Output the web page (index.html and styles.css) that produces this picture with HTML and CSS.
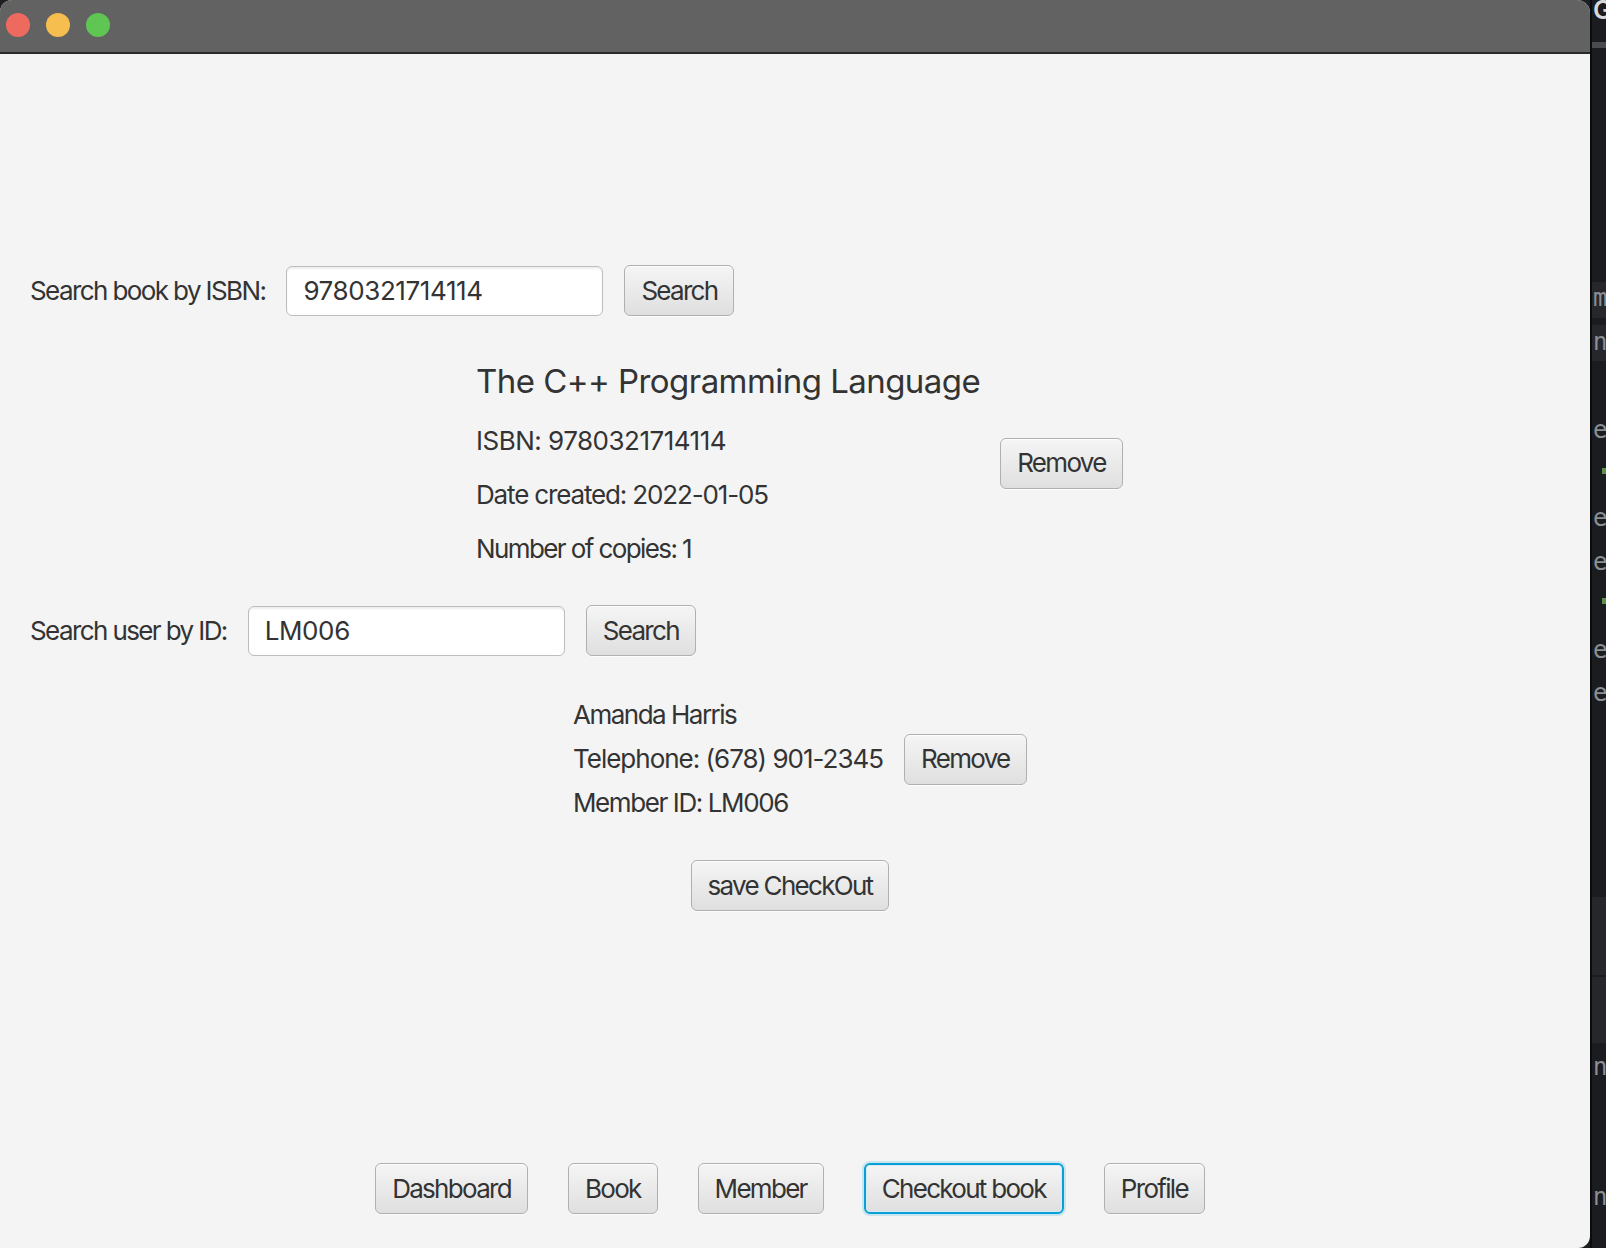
FILE: index.html
```html
<!DOCTYPE html>
<html lang="en">
<head>
<meta charset="utf-8">
<title>Checkout book</title>
<link rel="stylesheet" href="styles.css">
</head>
<body>
<div class="screen">
  <div class="window">
    <div class="titlebar">
      <span class="light red"></span>
      <span class="light yellow"></span>
      <span class="light green"></span>
    </div>
    <div class="content">
      <div class="search-row row-book">
        <label class="search-label">Search book by ISBN:</label>
        <input class="field field-isbn" type="text" value="9780321714114">
        <button class="btn">Search</button>
      </div>

      <div class="book">
        <div class="book-info">
          <h1 class="book-title">The C++ Programming Language</h1>
          <p class="book-line b-isbn">ISBN: 9780321714114</p>
          <p class="book-line b-date">Date created: 2022-01-05</p>
          <p class="book-line b-copies">Number of copies: 1</p>
        </div>
        <button class="btn">Remove</button>
      </div>

      <div class="search-row row-user">
        <label class="search-label">Search user by ID:</label>
        <input class="field field-user" type="text" value="LM006">
        <button class="btn">Search</button>
      </div>

      <div class="member">
        <p class="member-line m-name">Amanda Harris</p>
        <p class="member-line m-tel">Telephone: (678) 901-2345</p>
        <p class="member-line m-id">Member ID: LM006</p>
        <button class="btn m-remove">Remove</button>
      </div>

      <div class="save-wrap">
        <button class="btn">save CheckOut</button>
      </div>

      <nav class="nav">
        <button class="btn">Dashboard</button>
        <button class="btn">Book</button>
        <button class="btn">Member</button>
        <button class="btn btn-focus">Checkout book</button>
        <button class="btn">Profile</button>
      </nav>
    </div>
  </div>
  <div class="ide-strip">
    <span class="frag frag-g">G</span>
    <span class="frag-bar bar-top"></span>
    <span class="frag-box box-1"></span>
    <span class="frag-box box-2"></span>
    <span class="frag f1">m</span>
    <span class="frag f2">n</span>
    <span class="frag f3">e</span>
    <span class="dot d1"></span>
    <span class="frag f4">e:</span>
    <span class="frag f5">e</span>
    <span class="dot d2"></span>
    <span class="frag f6">e:</span>
    <span class="frag f7">e:</span>
    <span class="frag-box box-3"></span>
    <span class="frag-box box-4"></span>
    <span class="frag f8">n</span>
    <span class="frag f9">n</span>
  </div>
</div>
</body>
</html>
```

FILE: styles.css
```css
* { box-sizing: border-box; }

html, body {
  margin: 0;
  padding: 0;
  background: #1e1f22;
}

.screen {
  display: flex;
  width: 1606px;
  height: 1248px;
  overflow: hidden;
}

.window {
  width: 1590px;
  height: 1248px;
  display: flex;
  flex-direction: column;
  background: #f4f4f4;
  border-radius: 12px 13px 12px 0;
  overflow: hidden;
  font-family: "Inter", "Roboto", "Liberation Sans", sans-serif;
  color: #333333;
}

.titlebar {
  height: 54px;
  flex: 0 0 54px;
  background: #626262;
  border-bottom: 2px solid #2a2a2a;
  display: flex;
  align-items: center;
  padding-left: 6px;
  gap: 16px;
  padding-bottom: 2px;
}

.light {
  width: 24px;
  height: 24px;
  border-radius: 50%;
  display: block;
}
.red { background: #ee6a5f; }
.yellow { background: #f5be4f; }
.green { background: #5fc553; }

.content {
  flex: 1;
  display: flex;
  flex-direction: column;
  width: 1580px;
  padding-bottom: 34px;
}

.search-row {
  display: flex;
  align-items: center;
  gap: 21px;
  padding-left: 30px;
  height: 51px;
}
.row-book { margin-top: 211px; }
.row-user { margin-top: 40px; }

.search-label {
  font-size: 26px;
  letter-spacing: -1.6px;
}

.field {
  height: 50px;
  width: 317px;
  border: 1px solid #bdbdbd;
  border-radius: 6px;
  background: #ffffff;
  box-shadow: inset 0 2px 2px rgba(0, 0, 0, 0.07);
  font-family: inherit;
  font-size: 26px;
  color: #333333;
  padding: 0 16px;
  outline: none;
  letter-spacing: -0.4px;
}

.btn {
  height: 51px;
  padding: 0 16px;
  border: 1px solid #b0b0b0;
  border-radius: 6px;
  background: linear-gradient(#f5f5f5, #dfdfdf);
  box-shadow: inset 0 1px 0 rgba(255, 255, 255, 0.8), 0 1px 0 rgba(255, 255, 255, 0.7);
  font-family: inherit;
  font-size: 26px;
  color: #333333;
  letter-spacing: -1.7px;
  line-height: 1;
}

.btn-focus {
  border: 2px solid #0a9fd6;
  box-shadow: 0 0 0 2px rgba(3, 158, 211, 0.18), inset 0 0 0 1px #d6ecf5;
}

.book {
  display: flex;
  align-items: center;
  gap: 20px;
  margin-top: 45px;
  padding-left: 476px;
}

.book-info {
  display: flex;
  flex-direction: column;
}

.book-title {
  margin: 0;
  font-size: 33px;
  font-weight: 400;
  line-height: 40px;
  letter-spacing: -0.55px;
}

.book-line {
  margin: 22px 0 0;
  font-size: 26px;
  line-height: 32px;
}
.book-title + .book-line { margin-top: 24px; }
.b-isbn { letter-spacing: -0.5px; }
.b-date { letter-spacing: -1.15px; }
.b-copies { letter-spacing: -1.6px; }

.member {
  display: grid;
  grid-template-columns: auto auto;
  justify-content: start;
  column-gap: 21px;
  row-gap: 12px;
  align-items: center;
  margin-top: 43px;
  padding-left: 573px;
}

.member-line {
  margin: 0;
  font-size: 26px;
  line-height: 32px;
  grid-column: 1;
}
.m-name { grid-row: 1; letter-spacing: -1.5px; }
.m-tel { grid-row: 2; letter-spacing: -1.0px; }
.m-id { grid-row: 3; letter-spacing: -1.4px; }
.m-remove { grid-column: 2; grid-row: 2; margin: -10px 0; }

.save-wrap {
  display: flex;
  justify-content: center;
  margin-top: 41px;
}

.nav {
  margin-top: auto;
  display: flex;
  justify-content: center;
  gap: 40px;
}

/* IDE window visible behind the app window */
.ide-strip {
  position: relative;
  flex: 0 0 16px;
  height: 1248px;
  background: #1b1c1f;
  border-left: 2px solid #0c0c0d;
  overflow: hidden;
  font-family: "DejaVu Sans Mono", monospace;
}

.frag {
  position: absolute;
  left: 1px;
  font-size: 24px;
  line-height: 1;
  color: #8c8f94;
}
.frag-g {
  top: -3px;
  color: #d8d8d8;
  font-family: "Inter", sans-serif;
  font-weight: 600;
  font-size: 26px;
}
.frag-bar {
  position: absolute;
  left: 0;
  right: 0;
  display: block;
}
.bar-top { top: 42px; height: 6px; background: #4a4b4e; }

.frag-box {
  position: absolute;
  left: 0;
  right: 0;
  display: block;
  background: #26272a;
}
.box-1 { top: 282px; height: 36px; }
.box-2 { top: 325px; height: 36px; }
.box-3 { top: 897px; height: 78px; }
.box-4 { top: 977px; height: 66px; }

.f1 { top: 286px; }
.f2 { top: 330px; }
.f3 { top: 418px; }
.f4 { top: 506px; }
.f5 { top: 550px; }
.f6 { top: 638px; }
.f7 { top: 681px; }
.f8 { top: 1055px; }
.f9 { top: 1185px; }

.dot {
  position: absolute;
  left: 10px;
  width: 4px;
  height: 6px;
  background: #5f8f4e;
  display: block;
}
.d1 { top: 468px; }
.d2 { top: 598px; }
```
